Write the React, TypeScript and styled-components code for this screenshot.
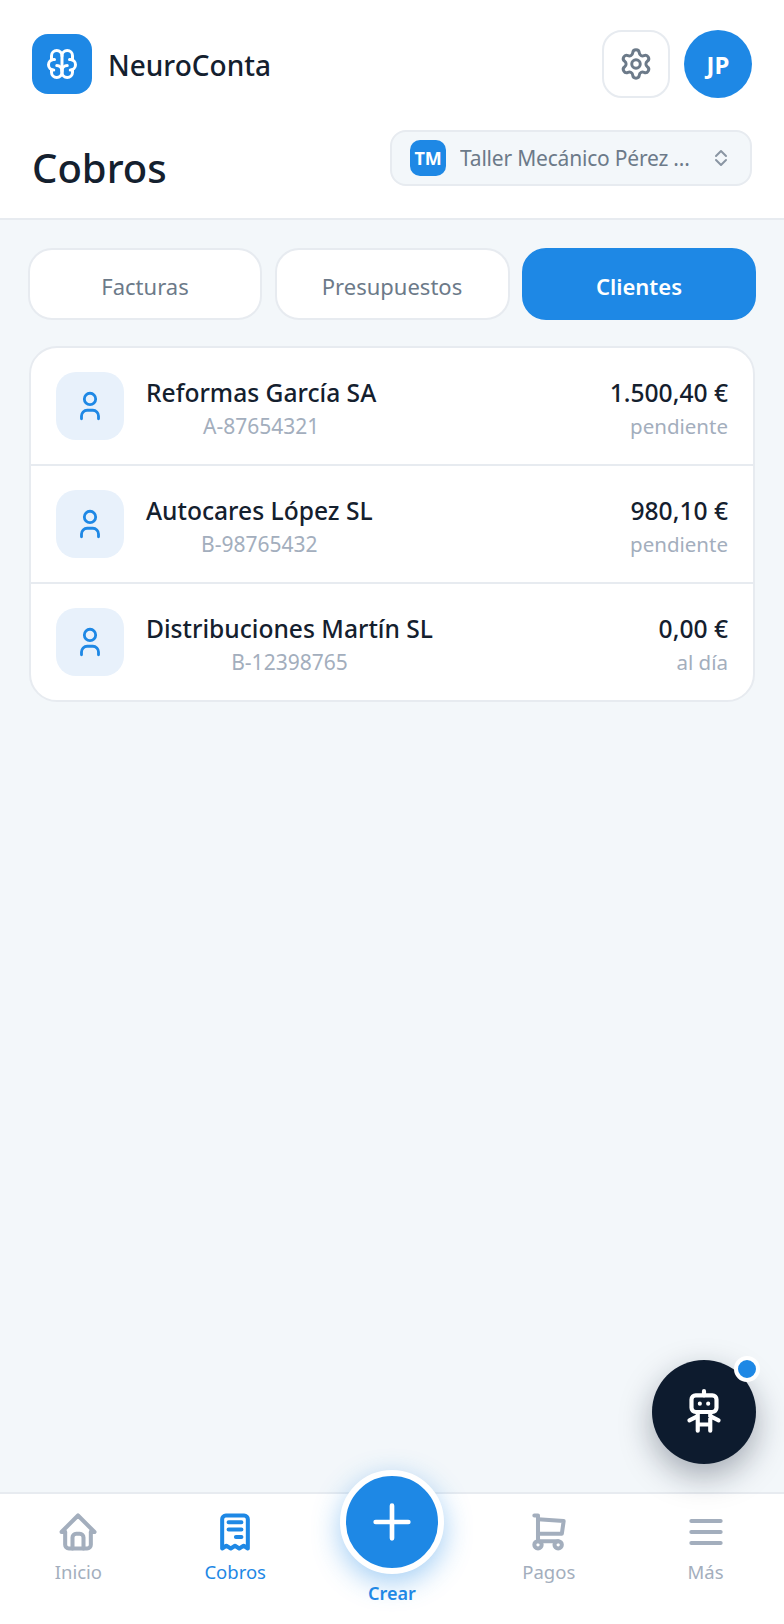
import * as React from 'react';
import styled, { createGlobalStyle } from 'styled-components';
import { Settings } from 'lucide-react';

const GlobalStyle = createGlobalStyle`
  html, body {
    margin: 0;
    padding: 0;
    background: #f3f7fa;
  }
  * {
    box-sizing: border-box;
  }
`;

const Screen = styled.div`
  position: relative;
  display: flex;
  flex-direction: column;
  width: 784px;
  height: 1624px;
  overflow: hidden;
  background: #f3f7fa;
  color: #14202e;
  font-family: 'Noto Sans', 'Open Sans', sans-serif;
`;

const Header = styled.header`
  display: flex;
  flex-direction: column;
  height: 220px;
  padding: 30px 32px 0;
  background: #fff;
  border-bottom: 2px solid #e7ebf0;
`;

const TopRow = styled.div`
  display: flex;
  align-items: center;
  justify-content: space-between;
`;

const Brand = styled.div`
  display: flex;
  align-items: center;
  gap: 16px;
`;

const LogoBox = styled.div`
  display: flex;
  align-items: center;
  justify-content: center;
  width: 60px;
  height: 60px;
  border-radius: 16px;
  background: #1e88e5;
`;

const BrandName = styled.span`
  padding-top: 2px;
  font-size: 28px;
  font-weight: 500;
`;

const HeaderActions = styled.div`
  display: flex;
  gap: 14px;
`;

const SettingsButton = styled.button`
  display: flex;
  align-items: center;
  justify-content: center;
  width: 68px;
  height: 68px;
  padding: 0;
  border: 2px solid #e7ebf0;
  border-radius: 20px;
  background: #fff;
`;

const Avatar = styled.div`
  display: flex;
  align-items: center;
  justify-content: center;
  width: 68px;
  height: 68px;
  border-radius: 50%;
  background: #1e88e5;
  color: #fff;
  font-size: 24px;
  font-weight: 700;
`;

const TitleRow = styled.div`
  display: flex;
  align-items: flex-start;
  justify-content: space-between;
  margin-top: 32px;
`;

const Title = styled.h1`
  margin: 10px 0 0;
  font-size: 40px;
  line-height: 56px;
  font-weight: 500;
`;

const CompanySelect = styled.div`
  display: flex;
  align-items: center;
  width: 362px;
  height: 56px;
  padding: 0 17px 0 18px;
  border: 2px solid #e7ebf0;
  border-radius: 16px;
  background: #f3f7fa;
`;

const CompanyBadge = styled.div`
  display: flex;
  flex: none;
  align-items: center;
  justify-content: center;
  width: 36px;
  height: 36px;
  border-radius: 10px;
  background: #1e88e5;
  color: #fff;
  font-size: 18px;
  font-weight: 700;
  letter-spacing: -0.3px;
`;

const CompanyName = styled.span`
  flex: 1;
  margin-left: 14px;
  overflow: hidden;
  color: #6c7a89;
  font-size: 21px;
  letter-spacing: -0.2px;
  white-space: nowrap;
`;

const Content = styled.main`
  flex: 1;
  padding: 28px 28px 0;
`;

const Tabs = styled.div`
  display: grid;
  grid-template-columns: 234px 235px 234px;
  gap: 12.5px;
`;

const Tab = styled.button<{ $active?: boolean }>`
  height: 72px;
  padding: 3px 0 0;
  border: 2px solid ${(p) => (p.$active ? '#1e88e5' : '#e7ebf0')};
  border-radius: 24px;
  background: ${(p) => (p.$active ? '#1e88e5' : '#fff')};
  color: ${(p) => (p.$active ? '#fff' : '#6c7a89')};
  font-family: inherit;
  font-size: 22px;
  font-weight: ${(p) => (p.$active ? 600 : 400)};
`;

const Card = styled.section`
  margin: 26px 0 0 1px;
  width: 726px;
  overflow: hidden;
  border: 2px solid #e7ebf0;
  border-radius: 28px;
  background: #fff;
`;

const Row = styled.div`
  display: flex;
  align-items: center;
  height: 116px;
  padding: 0 25px;
  & + & {
    height: 118px;
    border-top: 2px solid #e7ebf0;
  }
`;

const RowIcon = styled.div`
  display: flex;
  flex: none;
  align-items: center;
  justify-content: center;
  width: 68px;
  height: 68px;
  border-radius: 20px;
  background: #e8f1fb;
`;

const RowMain = styled.div`
  display: flex;
  flex: 1;
  flex-direction: column;
  align-items: flex-start;
  margin-left: 22px;
  padding-top: 4px;
`;

const NameBlock = styled.div`
  text-align: center;
`;

const ClientName = styled.div`
  font-size: 24.6px;
  line-height: 32px;
  font-weight: 500;
`;

const TaxId = styled.div`
  margin-top: 3px;
  color: #a3aebd;
  font-size: 21px;
  line-height: 28px;
`;

const RowAmount = styled.div`
  padding-top: 4px;
  text-align: right;
`;

const Amount = styled.div`
  font-size: 24.6px;
  line-height: 32px;
  font-weight: 500;
`;

const Status = styled.div`
  margin-top: 3px;
  color: #a3aebd;
  font-size: 20.5px;
  line-height: 28px;
`;

const BottomNav = styled.nav`
  display: grid;
  grid-template-columns: repeat(5, 1fr);
  height: 132px;
  background: #fff;
  border-top: 2px solid #e7ebf0;
`;

const NavItem = styled.div<{ $active?: boolean }>`
  display: flex;
  flex-direction: column;
  align-items: center;
  padding-top: 16px;
  color: ${(p) => (p.$active ? '#1e88e5' : '#a3aebd')};
  font-size: 18.5px;
`;

const NavLabel = styled.span`
  margin-top: 4px;
  line-height: 28px;
`;

const CreateItem = styled.div`
  position: relative;
  color: #1e88e5;
  font-size: 18px;
  font-weight: 600;
`;

const CreateButton = styled.div`
  position: absolute;
  top: -24px;
  left: 50%;
  display: flex;
  align-items: center;
  justify-content: center;
  width: 104px;
  height: 104px;
  margin-left: -52px;
  border: 6px solid #fff;
  border-radius: 50%;
  background: #1e88e5;
  box-shadow: 0 8px 28px rgba(30, 136, 229, 0.42);
`;

const CreateLabel = styled.span`
  position: absolute;
  top: 85px;
  left: 0;
  right: 0;
  line-height: 28px;
  text-align: center;
`;

const AssistantButton = styled.div`
  position: absolute;
  top: 1360px;
  left: 652px;
  display: flex;
  align-items: center;
  justify-content: center;
  width: 104px;
  height: 104px;
  border-radius: 50%;
  background: #0d1b2e;
  box-shadow: 0 12px 32px rgba(13, 27, 46, 0.35);
`;

const AssistantDot = styled.span`
  position: absolute;
  top: -4px;
  right: -4px;
  width: 26px;
  height: 26px;
  border: 4px solid #fff;
  border-radius: 50%;
  background: #1e88e5;
`;

const Icon = styled.svg<{ $size: number; $color: string; $weight?: number }>`
  display: block;
  flex: none;
  width: ${(p) => p.$size}px;
  height: ${(p) => p.$size}px;
  fill: none;
  stroke: ${(p) => p.$color};
  stroke-width: ${(p) => p.$weight ?? 2};
  stroke-linecap: round;
  stroke-linejoin: round;
`;

const clients = [
  { name: 'Reformas García SA', taxId: 'A-87654321', amount: '1.500,40 €', status: 'pendiente' },
  { name: 'Autocares López SL', taxId: 'B-98765432', amount: '980,10 €', status: 'pendiente' },
  { name: 'Distribuciones Martín SL', taxId: 'B-12398765', amount: '0,00 €', status: 'al día' },
];

const App: React.FC = () => (
  <Screen>
    <GlobalStyle />
    <Header>
      <TopRow>
        <Brand>
          <LogoBox>
            <Icon viewBox="0 0 24 24" $size={36} $color="#fff">
              <path d="M15.5 13a3.5 3.5 0 0 0-3.5 3.5v1a3.5 3.5 0 0 0 7 0v-1.8" />
              <path d="M8.5 13a3.5 3.5 0 0 1 3.5 3.5v1a3.5 3.5 0 0 1-7 0v-1.8" />
              <path d="M17.5 16a3.5 3.5 0 0 0 0-7H17" />
              <path d="M19 9.3V6.5a3.5 3.5 0 0 0-7 0" />
              <path d="M6.5 16a3.5 3.5 0 0 1 0-7H7" />
              <path d="M5 9.3V6.5a3.5 3.5 0 0 1 7 0v10" />
            </Icon>
          </LogoBox>
          <BrandName>NeuroConta</BrandName>
        </Brand>
        <HeaderActions>
          <SettingsButton>
            <Settings size={34} color="#6c7a89" strokeWidth={2.1} />
          </SettingsButton>
          <Avatar>JP</Avatar>
        </HeaderActions>
      </TopRow>
      <TitleRow>
        <Title>Cobros</Title>
        <CompanySelect>
          <CompanyBadge>TM</CompanyBadge>
          <CompanyName>Taller Mecánico Pérez ...</CompanyName>
          <Icon viewBox="0 0 24 24" $size={24} $color="#8a96a3">
            <path d="m7 10 5-5 5 5M17 14l-5 5-5-5" />
          </Icon>
        </CompanySelect>
      </TitleRow>
    </Header>
    <Content>
      <Tabs>
        <Tab>Facturas</Tab>
        <Tab>Presupuestos</Tab>
        <Tab $active>Clientes</Tab>
      </Tabs>
      <Card>
        {clients.map((client) => (
          <Row key={client.taxId}>
            <RowIcon>
              <Icon viewBox="0 0 24 24" $size={34} $color="#1e88e5">
                <path d="M8 7a4 4 0 1 0 8 0 4 4 0 0 0-8 0" />
                <path d="M6 21v-2a4 4 0 0 1 4-4h4a4 4 0 0 1 4 4v2" />
              </Icon>
            </RowIcon>
            <RowMain>
              <NameBlock>
                <ClientName>{client.name}</ClientName>
                <TaxId>{client.taxId}</TaxId>
              </NameBlock>
            </RowMain>
            <RowAmount>
              <Amount>{client.amount}</Amount>
              <Status>{client.status}</Status>
            </RowAmount>
          </Row>
        ))}
      </Card>
    </Content>
    <BottomNav>
      <NavItem>
        <Icon viewBox="0 0 24 24" $size={44} $color="#a3aebd" $weight={2.2}>
          <path d="M5 12H3l9-9 9 9h-2" />
          <path d="M5 12v7a2 2 0 0 0 2 2h10a2 2 0 0 0 2-2v-7" />
          <path d="M9 21v-6a2 2 0 0 1 2-2h2a2 2 0 0 1 2 2v6" />
        </Icon>
        <NavLabel>Inicio</NavLabel>
      </NavItem>
      <NavItem $active>
        <Icon viewBox="0 0 24 24" $size={44} $color="#1e88e5" $weight={2.2}>
          <path d="M5 21V5a2 2 0 0 1 2-2h10a2 2 0 0 1 2 2v16l-2.3-1.5L14.3 21 12 19.5 9.7 21l-2.4-1.5z" />
          <path d="M8.5 6.7h7M8.5 10.6h7M12.5 14.7h3" />
        </Icon>
        <NavLabel>Cobros</NavLabel>
      </NavItem>
      <CreateItem>
        <CreateButton>
          <Icon viewBox="0 0 24 24" $size={56} $color="#fff">
            <path d="M12 5v14M5 12h14" />
          </Icon>
        </CreateButton>
        <CreateLabel>Crear</CreateLabel>
      </CreateItem>
      <NavItem>
        <Icon viewBox="0 0 24 24" $size={44} $color="#a3aebd" $weight={2.2}>
          <circle cx="6" cy="19" r="2" />
          <circle cx="17" cy="19" r="2" />
          <path d="M17 17H6V3H4" />
          <path d="m6 5 14 1-1 7H6" />
        </Icon>
        <NavLabel>Pagos</NavLabel>
      </NavItem>
      <NavItem>
        <Icon viewBox="0 0 24 24" $size={44} $color="#a3aebd" $weight={2.2}>
          <path d="M4 6h16M4 12h16M4 18h16" />
        </Icon>
        <NavLabel>Más</NavLabel>
      </NavItem>
    </BottomNav>
    <AssistantButton>
      <Icon viewBox="0 0 24 24" $size={50} $color="#fff">
        <path d="M6 6a2 2 0 0 1 2-2h8a2 2 0 0 1 2 2v4a2 2 0 0 1-2 2H8a2 2 0 0 1-2-2z" />
        <path d="M12 2v2M9 12v9M15 12v9M5 16l4-2M15 14l4 2M9 18h6M10 8v.01M14 8v.01" />
      </Icon>
      <AssistantDot />
    </AssistantButton>
  </Screen>
);

export default App;
